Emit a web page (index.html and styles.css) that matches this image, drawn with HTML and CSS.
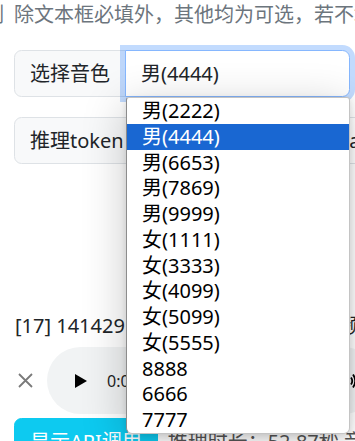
FILE: index.html
```html
<!DOCTYPE html>
<html lang="zh">
<head>
<meta charset="utf-8">
<title>TTS</title>
<link rel="stylesheet" href="styles.css">
</head>
<body>
<div class="page">
  <p class="hint"><span class="hint-cut">例</span>除文本框必填外，其他均为可选，若不填则使用默认值</p>

  <div class="group group-voice">
    <span class="group-label">选择音色</span>
    <div class="select-wrap">
      <div class="select is-focused">男(4444)</div>
      <ul class="popup">
        <li>男(2222)</li>
        <li class="active">男(4444)</li>
        <li>男(6653)</li>
        <li>男(7869)</li>
        <li>男(9999)</li>
        <li>女(1111)</li>
        <li>女(3333)</li>
        <li>女(4099)</li>
        <li>女(5099)</li>
        <li>女(5555)</li>
        <li>8888</li>
        <li>6666</li>
        <li>7777</li>
      </ul>
    </div>
  </div>

  <div class="group group-token">
    <span class="group-label">推理token</span>
    <div class="input">[oral_2][laugh_0][break_6]</div>
  </div>

  <div class="result">[17] 141429 个字符，生成 9.64 秒音频，52.87s</div>

  <div class="audio-row">
    <svg class="clear" width="15" height="15" viewBox="0 0 15 15" aria-hidden="true">
      <path d="M1 1 L14 14 M14 1 L1 14" stroke="#7a7a7a" stroke-width="1.8" fill="none"/>
    </svg>
    <div class="player">
      <svg class="play" width="12" height="14" viewBox="0 0 12 14" aria-hidden="true">
        <path d="M0 0 L12 7 L0 14 Z" fill="#000"/>
      </svg>
      <span class="time">0:00 / 0:09</span>
      <svg class="volume" width="20" height="20" viewBox="0 0 20 20" aria-hidden="true">
        <path d="M2 7 H6 L10 3 V17 L6 13 H2 Z" fill="#000"/>
        <path d="M13 6.5 Q15.5 10 13 13.5" stroke="#000" stroke-width="1.8" fill="none"/>
        <path d="M15 3.5 Q19.5 10 15 16.5" stroke="#000" stroke-width="1.8" fill="none"/>
      </svg>
    </div>
  </div>

  <div class="actions">
    <button class="btn-info" type="button">显示API调用</button>
    <span class="elapsed">推理时长：52.87秒 音频时长：9.64秒</span>
  </div>
</div>
</body>
</html>
```

FILE: styles.css
```css
html, body {
  margin: 0;
  padding: 0;
  overflow: hidden;
  background: #fff;
}

body {
  width: 355px;
  height: 441px;
  font-family: "Noto Sans", "Noto Sans CJK SC", sans-serif;
  font-size: 20px;
  line-height: 30px;
  color: #212529;
}

.page {
  width: 640px;
  padding-left: 14px;
}

.hint {
  margin: 0 0 20px;
  color: #6c757d;
  white-space: nowrap;
  text-indent: -30px;
}

.hint-cut {
  margin-right: 10px;
}

.group {
  display: flex;
  white-space: nowrap;
}

.group-voice {
  width: 336px;
}

.group-token {
  width: 440px;
  margin-top: 20px;
}

.group-label {
  padding: 7.5px 15px;
  background: #f8f9fa;
  border: 1px solid #dee2e6;
  border-radius: 7.5px 0 0 7.5px;
}

.select-wrap {
  position: relative;
  flex: 1;
  margin-left: -1px;
}

.select {
  padding: 7.5px 15px;
  background: #fff;
  border: 1px solid #dee2e6;
  border-radius: 0 7.5px 7.5px 0;
}

.select.is-focused {
  border-color: #86b7fe;
  box-shadow: 0 0 0 5px rgba(13, 110, 253, 0.25);
}

.popup {
  position: absolute;
  top: 100%;
  left: 1px;
  right: 0;
  z-index: 10;
  margin: 0;
  padding: 0;
  list-style: none;
  background: #fff;
  border: 1px solid #c4c4c4;
  border-left-color: #8c8c8c;
  border-radius: 3px 3px 6px 6px;
  box-shadow: -2px 8px 44px rgba(0, 0, 0, 0.2), 0 2px 6px rgba(0, 0, 0, 0.12);
  color: #000;
  line-height: 25.75px;
}

.popup li {
  height: 25.75px;
  padding-left: 15px;
}

.popup .active {
  background: #1967d2;
  color: #fff;
}

.input {
  flex: 1;
  padding: 7.5px 15px;
  background: #fff;
  border: 1px solid #dee2e6;
  border-left: 0;
  border-radius: 0 7.5px 7.5px 0;
}

.result {
  margin-top: 147px;
  padding-left: 1px;
  white-space: nowrap;
}

.audio-row {
  display: flex;
  align-items: center;
  gap: 14px;
  height: 67px;
  margin-top: 6px;
}

.clear {
  margin-left: 4px;
  flex: none;
}

.player {
  display: flex;
  align-items: center;
  box-sizing: border-box;
  width: 330px;
  height: 67px;
  padding: 0 19px 0 28px;
  background: #f1f3f4;
  border-radius: 34px;
  flex: none;
}

.play {
  flex: none;
}

.time {
  margin-left: 20px;
  font-size: 16px;
  color: #1f1f1f;
  white-space: nowrap;
}

.volume {
  margin-left: auto;
  flex: none;
}

.actions {
  display: flex;
  align-items: center;
  gap: 10px;
  margin-top: 4px;
  white-space: nowrap;
}

.btn-info {
  font: inherit;
  padding: 7.5px 15px;
  background: #0dcaf0;
  border: 1px solid #0dcaf0;
  border-radius: 7.5px;
  color: #fff;
}

.elapsed {
  color: #555;
}
```
